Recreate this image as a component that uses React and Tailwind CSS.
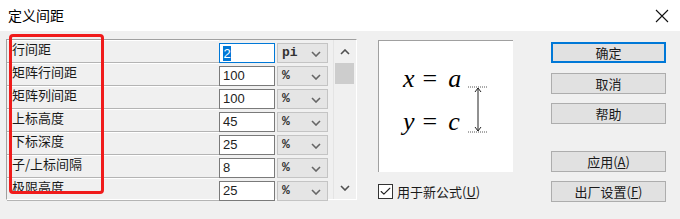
import { Check } from "lucide-react";

const ROWS = [
  { label: "行间距", value: "2", unit: "pi", focused: true },
  { label: "矩阵行间距", value: "100", unit: "%" },
  { label: "矩阵列间距", value: "100", unit: "%" },
  { label: "上标高度", value: "45", unit: "%" },
  { label: "下标深度", value: "25", unit: "%" },
  { label: "子/上标间隔", value: "8", unit: "%" },
  { label: "极限高度", value: "25", unit: "%" },
];

const cjk = "font-['Noto_Sans_CJK_SC','Liberation_Sans',sans-serif]";

function Chevron({ up, className }) {
  return (
    <svg width="10" height="6" viewBox="0 0 10 6" className={className}>
      <path
        d={up ? "M1 5 L5 1 L9 5" : "M1 1 L5 5 L9 1"}
        fill="none"
        stroke="currentColor"
        strokeWidth="1.6"
      />
    </svg>
  );
}

function Row({ row }) {
  return (
    <div className="flex h-[23px]">
      <div className={`w-[212px] h-full border-t border-white border-b border-b-[#b4b4b4] pl-[5px] pt-[1px] text-[13px] leading-[14px] text-[#1a1a1a] overflow-hidden ${cjk}`}>
        {row.label}
      </div>
      <div
        className={`mt-[3px] w-[56px] h-[20px] bg-white border ${
          row.focused ? "border-[#0078d7]" : "border-[#7a7a7a]"
        } pl-[3px] flex items-center font-['Liberation_Sans',sans-serif] text-[13px] text-[#222]`}
      >
        {row.focused ? (
          <span className="bg-[#0078d7] text-white leading-[15px] px-[0.5px]">{row.value}</span>
        ) : (
          row.value
        )}
      </div>
      <div className="mt-[3px] ml-[2px] w-[51px] h-[20px] bg-[#e5e5e5] border border-[#c4c4c4] flex items-center justify-between pl-[4px] pr-[6px]">
        <span className="font-['Liberation_Mono',monospace] font-bold text-[13px] text-[#333]">{row.unit}</span>
        <Chevron className="text-[#666] mt-[2px]" />
      </div>
    </div>
  );
}

function Btn({ children, primary, className = "" }) {
  return (
    <div
      className={`w-[115px] h-[21px] bg-[#e1e1e1] flex items-center justify-center text-[13px] text-[#1a1a1a] ${cjk} ${
        primary ? "border-2 border-[#0078d7]" : "border border-[#adadad]"
      } ${className}`}
    >
      {children}
    </div>
  );
}

export default function App() {
  return (
    <div className="w-[680px] h-[219px] bg-[#f0f0f0] overflow-hidden relative">
      {/* title bar */}
      <div className="h-[31px] bg-white flex items-center justify-between pl-[8px] pr-[11px]">
        <span className={`text-[14px] text-black ${cjk}`}>定义间距</span>
        <svg width="14" height="14" viewBox="0 0 14 14">
          <path d="M1 1 L13 13 M13 1 L1 13" stroke="#111" strokeWidth="1.1" />
        </svg>
      </div>

      <div className="flex pl-[6px] pt-[8px]">
        {/* spacing table */}
        <div className="w-[351px] h-[161px] border-t border-l border-[#a0a0a0] border-r border-b border-r-white border-b-white flex">
          <div className="w-[321px] flex flex-col">
            {ROWS.map((r) => (
              <Row key={r.label} row={r} />
            ))}
          </div>
          <div className="ml-[5px] w-[22px] h-full border-l border-[#e4e4e4] flex flex-col">
            <div className="h-[23px] flex items-center justify-center text-[#505050]">
              <Chevron up />
            </div>
            <div className="ml-[1px] w-[19px] h-[21px] bg-[#cdcdcd]" />
            <div className="flex-1" />
            <div className="h-[23px] flex items-center justify-center text-[#505050]">
              <Chevron />
            </div>
          </div>
        </div>

        {/* preview */}
        <div className="ml-[21px] mt-[1px] flex flex-col">
          <div className="relative w-[135px] h-[132px] bg-white border-t border-l border-[#a0a0a0]">
            <div className="pl-[24px] pt-[25px] flex flex-col gap-[17px] font-['Liberation_Serif',serif] text-[26px] leading-[26px] text-black">
              <div className="flex">
                <i>x</i>
                <span className="ml-[8px]">=</span>
                <i className="ml-[11px]">a</i>
              </div>
              <div className="flex">
                <i>y</i>
                <span className="ml-[8px]">=</span>
                <i className="ml-[11px]">c</i>
              </div>
            </div>
            <svg className="absolute left-0 top-0" width="135" height="132" viewBox="0 0 135 132">
              <path d="M89 46 H109 M89 91 H109" stroke="#555" strokeWidth="1" strokeDasharray="1 1" />
              <path d="M99 47 V90" stroke="#222" strokeWidth="1" />
              <path d="M96 51 L99 47 L102 51 M96 86 L99 90 L102 86" fill="none" stroke="#222" strokeWidth="1" />
            </svg>
          </div>
          <div className="mt-[10px] flex items-center gap-[4px]">
            <div className="w-[15px] h-[15px] border border-[#333] bg-white flex items-center justify-center">
              <Check size={13} strokeWidth={2} color="#222" />
            </div>
            <span className={`text-[13px] text-[#1a1a1a] ${cjk}`}>
              用于新公式(<span className="underline">U</span>)
            </span>
          </div>
        </div>

        {/* buttons */}
        <div className="ml-[38px] mt-[3px] flex flex-col">
          <Btn primary>确定</Btn>
          <Btn className="mt-[10px]">取消</Btn>
          <Btn className="mt-[9px]">帮助</Btn>
          <Btn className="mt-[27px]">
            应用(<span className="underline">A</span>)
          </Btn>
          <Btn className="mt-[9px]">
            出厂设置(<span className="underline">F</span>)
          </Btn>
        </div>
      </div>

      {/* red annotation rectangle */}
      <div className="absolute left-[9px] top-[34px] w-[95px] h-[160px] border-[3px] border-[#f01b1b] rounded-[4px]" />
    </div>
  );
}
